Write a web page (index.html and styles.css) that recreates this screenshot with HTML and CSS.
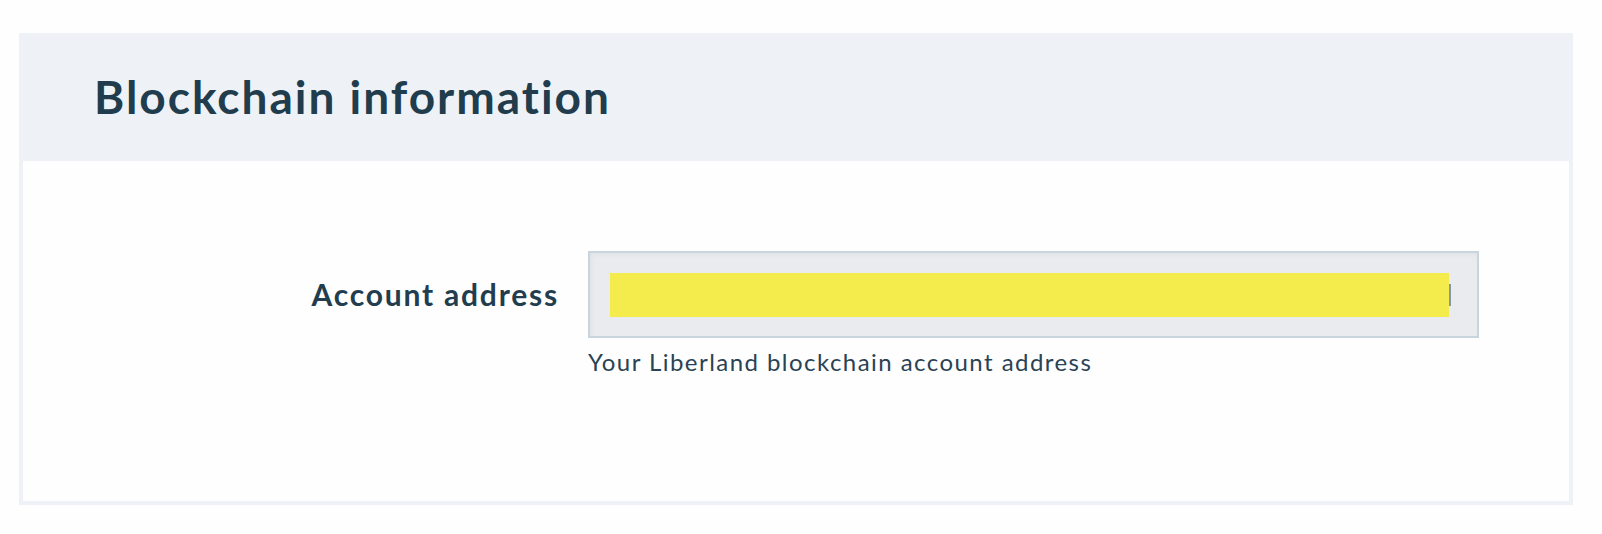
FILE: index.html
```html
<!DOCTYPE html>
<html lang="en">
<head>
<meta charset="utf-8">
<title>Blockchain information</title>
<link rel="stylesheet" href="styles.css">
</head>
<body>
<div class="page">
  <section class="card">
    <header class="card-header">
      <h2 class="card-title">Blockchain information</h2>
    </header>
    <div class="card-body">
      <div class="form-row">
        <label class="form-label" for="addr">Account address</label>
        <div class="form-field">
          <div class="input" id="addr">
            <span class="redacted"></span><span class="caret"></span>
          </div>
          <div class="help">Your Liberland blockchain account address</div>
        </div>
      </div>
    </div>
  </section>
</div>
</body>
</html>
```

FILE: styles.css
```css
* { box-sizing: border-box; }
html, body { margin: 0; padding: 0; background: #fefefe; }
body {
  font-family: Lato, "Open Sans", "Liberation Sans", sans-serif;
  color: #223d4e;
}
.page {
  padding: 33px 29px 29px 19px;
}
.card {
  border: 4px solid #eef2f7;
  background: #fefefe;
}
.card-header {
  background: #eef2f7;
  height: 124px;
  display: flex;
  align-items: center;
  padding-left: 71px;
}
.card-title {
  margin: 0;
  font-size: 46px;
  font-weight: 700;
  line-height: 1;
  letter-spacing: 2px;
  color: #213c4d;
  padding-bottom: 5px;
}
.card-body {
  height: 340px;
  padding-top: 90px;
}
.form-row {
  display: grid;
  grid-template-columns: 534px 891px;
  column-gap: 31px;
}
.form-label {
  text-align: right;
  font-size: 30px;
  font-weight: 700;
  line-height: 1;
  letter-spacing: 1.8px;
  padding-top: 28px;
  margin-right: -2px;
  color: #223d4e;
}
.input {
  height: 87px;
  border: 2px solid #c9d5dc;
  background: #e9ebee;
  box-shadow: inset 2px 2px 4px rgba(0,0,0,0.035);
  display: flex;
  align-items: center;
  padding-left: 20px;
}
.redacted {
  display: block;
  width: 839px;
  height: 44px;
  background: #f4eb4c;
}
.caret {
  display: block;
  width: 2px;
  height: 22px;
  background: #8797a6;
}
.help {
  margin-top: 10px;
  font-size: 24px;
  line-height: 1.2;
  letter-spacing: 1.45px;
  color: #2a4354;
}
```
